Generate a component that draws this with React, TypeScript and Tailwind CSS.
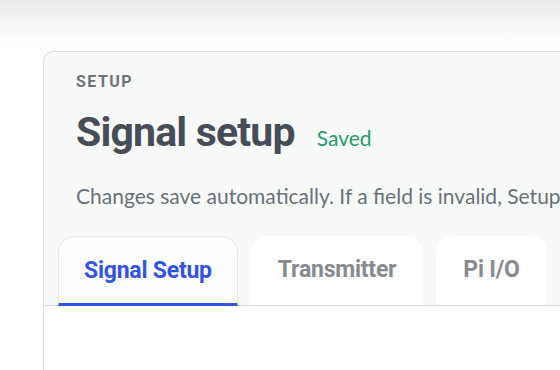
import React from "react"

const tabs = [
  { id: "signal", label: "Signal Setup" },
  { id: "tx", label: "Transmitter" },
  { id: "pi", label: "Pi I/O" },
]

export default function App() {
  const active = "signal"

  return (
    <div className="h-[370px] w-[560px] overflow-hidden bg-white font-['Roboto',sans-serif]">
      {/* top shade */}
      <div className="h-[51px] bg-gradient-to-b from-[#e9e9e9] via-[#f7f7f7] to-white" />

      {/* ── Setup card ── */}
      <div className="ml-[43px] w-[600px] rounded-tl-[10px] border-l border-t border-[#d8dadc] bg-[#f8f9f9]">
        <div className="pl-[32px] pt-[21px]">
          <p className="text-[16px] font-bold leading-[18px] tracking-[0.09em] text-[#6e7378]">SETUP</p>

          <div className="mt-[18px] flex items-baseline gap-[22px]">
            <h1 className="text-[41px] font-bold leading-[46px] tracking-[-0.02em] text-[#464d56]">Signal setup</h1>
            <span className="font-['Lato',sans-serif] text-[21px] text-[#2c9a6c]">Saved</span>
          </div>

          <p className="mt-[28px] whitespace-nowrap font-['Lato',sans-serif] text-[21px] leading-[26px] text-[#6b7178]">
            Changes save automatically. If a field is invalid, Setup keeps the last valid value.
          </p>
        </div>

        {/* ── Tabs ── */}
        <div className="mt-[27px] flex gap-[13px] border-b border-[#d9dbde] pl-[14px]">
          {tabs.map((tab) => {
            const isActive = tab.id === active
            return (
              <div
                key={tab.id}
                className={
                  isActive
                    ? "-mb-px flex h-[70px] items-center rounded-t-[16px] border border-b-[3px] border-[#e3e6ea] border-b-[#3354e3] bg-[#fcfdfd] px-[25px] pt-[2px] text-[23px] font-bold tracking-[-0.01em] text-[#3354e3]"
                    : "flex h-[69px] items-center rounded-t-[16px] bg-white px-[27px] text-[23px] font-bold tracking-[-0.01em] text-[#868b91]"
                }
              >
                {tab.label}
              </div>
            )
          })}
        </div>

        <div className="h-[80px] bg-white" />
      </div>
    </div>
  )
}
